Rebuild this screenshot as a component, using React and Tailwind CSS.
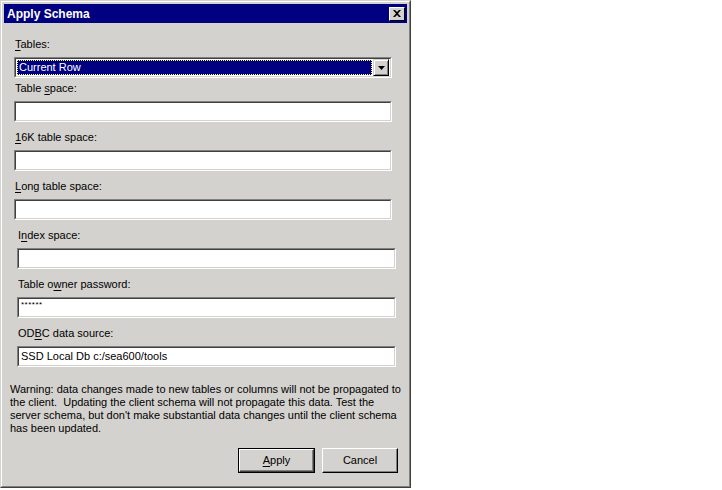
const FONT = { fontFamily: '"Liberation Sans", Arial, sans-serif' };

function Sunken({ children, className = "" }) {
  return (
    <div className={`border border-t-[#808080] border-l-[#808080] border-b-white border-r-white ${className}`}>
      <div className="h-full border border-t-[#404040] border-l-[#404040] border-b-[#d4d2ce] border-r-[#d4d2ce] bg-white">
        {children}
      </div>
    </div>
  );
}

function Field({ label, value, shift, small, className = "" }) {
  return (
    <div className={`${shift ? "ml-[3px] w-[379px]" : "w-[378px]"} ${className}`}>
      <div className="h-[28px] pt-[9px] pl-[1px] text-[11px] leading-[13px] text-black">{label}</div>
      <Sunken className="h-[21px]">
        <div
          className={
            small
              ? "px-[2px] pt-[1px] text-[8px] leading-[10px] tracking-[0.5px] text-black"
              : "px-[2px] pt-[2px] text-[11px] leading-[13px] text-black"
          }
        >
          {value}
        </div>
      </Sunken>
    </div>
  );
}

function U({ children }) {
  return <span className="underline underline-offset-[2px]">{children}</span>;
}

export default function App() {
  return (
    <div className="h-[490px] w-[722px] bg-white" style={FONT}>
      <div className="h-[488px] w-[411px] border border-t-[#d4d2ce] border-l-[#d4d2ce] border-b-[#404040] border-r-[#404040]">
        <div className="flex h-full flex-col border border-t-white border-l-white border-b-[#808080] border-r-[#808080] bg-[#d4d2ce] p-[2px]">
          {/* title bar */}
          <div className="flex h-[19px] items-center justify-between bg-[#000080] pl-[3px] pr-[2px]">
            <span className="text-[12px] font-bold leading-none text-white">Apply Schema</span>
            <div className="flex h-[14px] w-[16px] items-center justify-center border border-t-white border-l-white border-b-black border-r-black bg-[#d4d2ce]">
              <svg width="8" height="7" viewBox="0 0 8 7">
                <path d="M0 0h2l2 2 2-2h2L5 3.5 8 7H6L4 5 2 7H0l3-3.5z" fill="#000" />
              </svg>
            </div>
          </div>

          <div className="flex flex-col pl-[10px]">
            {/* Tables combo */}
            <div className="w-[378px]">
              <div className="h-[34px] pt-[15px] pl-[1px] text-[11px] leading-[13px] text-black">
                <U>T</U>ables:
              </div>
              <Sunken className="h-[21px]">
                <div className="flex h-full items-center bg-white p-[1px]">
                  <div className="flex h-[15px] flex-1 items-center border border-dotted border-[#ffff80] bg-[#000080] px-[1px] text-[11px] leading-[13px] text-white">
                    Current Row
                  </div>
                  <div className="ml-[1px] flex h-[17px] w-[16px] items-center justify-center border border-t-[#d4d2ce] border-l-[#d4d2ce] border-b-black border-r-black bg-[#d4d2ce] shadow-[inset_1px_1px_0_#fff,inset_-1px_-1px_0_#808080]">
                    <svg width="7" height="4" viewBox="0 0 7 4">
                      <path d="M0 0h7L3.5 4z" fill="#000" />
                    </svg>
                  </div>
                </div>
              </Sunken>
            </div>

            <Field className="-mt-[5px]" label={<>Table <U>s</U>pace:</>} />
            <Field label={<><U>1</U>6K table space:</>} />
            <Field label={<><U>L</U>ong table space:</>} />
            <Field shift label={<>I<U>n</U>dex space:</>} />
            <Field shift small label={<>Table o<U>w</U>ner password:</>} value="******" />
            <Field shift label={<>OD<U>B</U>C data source:</>} value="SSD Local Db c:/sea600/tools" />
          </div>

          <p className="mt-[16px] pl-[6px] pr-0 text-[11px] leading-[13px] text-black">
            Warning: data changes made to new tables or columns will not be propagated to the client.&nbsp; Updating the client schema will not propagate this data. Test the server schema, but don't make substantial data changes until the client schema has been updated.
          </p>

          <div className="mt-[13px] flex justify-end gap-[7px] pr-[9px]">
            <div className="border border-black">
              <div className="flex h-[23px] w-[75px] items-center justify-center border border-t-white border-l-white border-b-[#404040] border-r-[#404040] shadow-[inset_-1px_-1px_0_#808080] text-[11px] text-black">
                <U>A</U>pply
              </div>
            </div>
            <div className="flex h-[25px] w-[76px] items-center justify-center border border-t-white border-l-white border-b-black border-r-black shadow-[inset_-1px_-1px_0_#808080] text-[11px] text-black">
              Cancel
            </div>
          </div>
        </div>
      </div>
    </div>
  );
}
